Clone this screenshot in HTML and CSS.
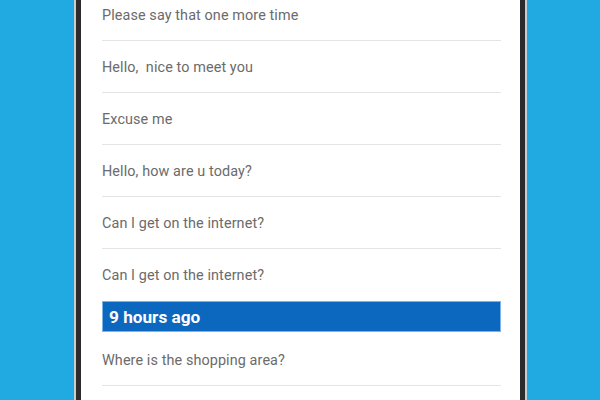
FILE: index.html
```html
<!DOCTYPE html>
<html>
<head>
<meta charset="utf-8">
<link rel="stylesheet" href="styles.css">
</head>
<body>
<div class="stage">
  <div class="phone">
    <div class="screen">
      <ul class="list">
        <li class="row first">Please say that one more time</li>
        <li class="row">Hello,&nbsp; nice to meet you</li>
        <li class="row">Excuse me</li>
        <li class="row">Hello, how are u today?</li>
        <li class="row">Can I get on the internet?</li>
        <li class="row last">Can I get on the internet?</li>
        <li class="header">9 hours ago</li>
        <li class="row after">Where is the shopping area?</li>
      </ul>
    </div>
  </div>
</div>
</body>
</html>
```
FILE: styles.css
```css
* { box-sizing: border-box; }
html, body { margin: 0; padding: 0; }
body {
  width: 600px;
  height: 400px;
  overflow: hidden;
  background: #21aae1;
  font-family: Roboto, "Liberation Sans", sans-serif;
}
.stage {
  display: flex;
  justify-content: flex-start;
  padding-left: 74px;
  height: 400px;
}
.phone {
  width: 453px;
  height: 400px;
  border-left: 2px solid #c9cdd0;
  border-right: 2px solid #c9cdd0;
  background: #2c2c2c;
  padding: 0 5px;
}
.screen {
  background: #fff;
  height: 400px;
  padding: 0 19px 0 21px;
  overflow: hidden;
}
.list {
  list-style: none;
  margin: -11px 0 0;
  padding: 0;
}
.row {
  height: 52px;
  display: flex;
  align-items: center;
  font-size: 14.4px;
  letter-spacing: 0.1px;
  color: #6b6b6b;
  border-bottom: 1px solid #e4e4e4;
  padding-top: 1px;
}
.row.last { border-bottom: none; height: 52px; }
.row.after { height: 54px; padding-top: 4px; }
.header {
  height: 31px;
  background: #0c67be;
  border: 1px solid #7fb3e6;
  color: #fff;
  font-weight: bold;
  font-size: 17.2px;
  display: flex;
  align-items: center;
  padding-left: 6px;
  padding-top: 1px;
}
```
